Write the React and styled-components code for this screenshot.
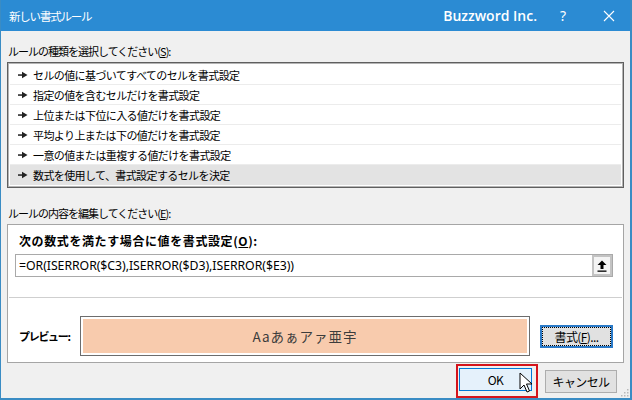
import React from 'react'
import styled, { createGlobalStyle } from 'styled-components'

const Global = createGlobalStyle`
  html, body {
    margin: 0;
    padding: 0;
    background: #f0f0f0;
  }
  body {
    font-family: "Noto Sans CJK JP", "Noto Sans", sans-serif;
    color: #000;
  }
`

const Win = styled.div`
  position: relative;
  width: 632px;
  height: 400px;
  box-sizing: border-box;
  background: #f0f0f0;
  border-left: 1px solid #3a8cc4;
  border-right: 2px solid #3a8cc4;
  border-bottom: 2px solid #3a8cc4;
  display: flex;
  flex-direction: column;
  overflow: hidden;
`

const TitleBar = styled.div`
  height: 31px;
  flex: none;
  background: #2b8bd3;
  display: flex;
  align-items: center;
  padding: 0 11px 0 9px;
  color: #fff;
  margin-left: -1px;
  margin-right: -2px;
`

const Title = styled.div`
  flex: 1;
  font-size: 11.5px;
  letter-spacing: -1.2px;
`

const Brand = styled.div`
  font-family: "Open Sans", "Noto Sans", sans-serif;
  font-weight: 600;
  font-size: 14px;
  margin-right: 20px;
`

const TitleBtn = styled.div`
  width: ${p => p.w}px;
  margin-left: ${p => p.gap || 0}px;
  display: flex;
  justify-content: center;
  font-size: 14px;
  font-family: "Noto Sans", sans-serif;
`

const Content = styled.div`
  flex: 1;
  padding: 0 6px 0 6px;
  display: flex;
  flex-direction: column;
`

const Label = styled.div`
  font-size: 11px;
  letter-spacing: -1px;
  height: 20px;
  line-height: 20px;
  margin-top: ${p => p.top}px;
  margin-left: 1px;
  u { text-decoration: underline; }
`

const List = styled.div`
  border: 1px solid #5f5f5f;
  box-shadow: inset 0 0 0 1px #b4b4b4;
  background: #fff;
  padding: 2px;
  margin-top: 1px;
`

const Row = styled.div`
  height: 20px;
  display: flex;
  align-items: center;
  font-size: 11px;
  letter-spacing: -0.6px;
  padding-left: 8px;
  background: ${p => (p.selected ? '#e3e3e3' : '#fff')};
  border-bottom: 1px solid ${p => (p.last ? 'transparent' : '#ececec')};
  box-sizing: border-box;
`

const Bullet = styled.svg`
  flex: none;
  margin-right: 5px;
`

const Group = styled.div`
  margin-top: 1px;
  border: 1px solid #a5a5a5;
  background: #fff;
  height: 139px;
  box-sizing: border-box;
  display: flex;
  flex-direction: column;
`

const BoldLabel = styled.div`
  font-weight: 700;
  font-size: 12px;
  letter-spacing: 0.6px;
  margin: 7px 0 0 11px;
  height: 17px;
  line-height: 17px;
  u { text-decoration: underline; }
`

const InputBox = styled.div`
  margin: 5px 10px 0 7px;
  height: 23px;
  box-sizing: border-box;
  border: 1px solid #a9a9a9;
  display: flex;
  align-items: center;
  padding-left: 3px;
`

const Formula = styled.div`
  flex: 1;
  font-family: "Noto Sans", sans-serif;
  font-size: 12.3px;
  letter-spacing: -0.05px;
`

const RefBtn = styled.div`
  width: 20px;
  height: 21px;
  box-sizing: border-box;
  background: #f4f4f4;
  border: 2px solid #c3c3c3;
  display: flex;
  align-items: center;
  justify-content: center;
`

const Divider = styled.div`
  margin: 20px 1px 0 1px;
  height: 1px;
  background: #cfcfcf;
`

const PreviewRow = styled.div`
  display: flex;
  align-items: center;
  margin-top: 18px;
`

const PreviewLabel = styled.div`
  width: 72px;
  flex: none;
  padding-left: 11px;
  box-sizing: border-box;
  white-space: nowrap;
  font-weight: 700;
  font-size: 11px;
  letter-spacing: -1.3px;
`

const Preview = styled.div`
  width: 450px;
  height: 40px;
  box-sizing: border-box;
  border: 1px solid #6d6d6d;
  padding: 2px;
  background: #fff;
`

const Swatch = styled.div`
  height: 100%;
  background: #f8cbad;
  display: flex;
  align-items: center;
  justify-content: center;
  font-size: 13.5px;
  letter-spacing: 1px;
  color: #3c3c3c;
`

const Button = styled.div`
  width: ${p => p.w || 72}px;
  height: 23px;
  box-sizing: border-box;
  display: flex;
  align-items: center;
  justify-content: center;
  font-size: 12px;
  letter-spacing: -0.6px;
  background: ${p => (p.hot ? '#e5f1fb' : '#e1e1e1')};
  border: 1px solid ${p => (p.focus ? '#2a7ac8' : p.hot ? '#0078d7' : '#adadad')};
  outline: ${p => (p.focus ? '1px dotted #000' : 'none')};
  outline-offset: -3px;
  box-shadow: ${p => (p.focus ? 'inset 0 0 0 1px #2a7ac8' : 'none')};
  u { text-decoration: underline; }
`

const FormatBtn = styled(Button)`
  margin-left: 10px;
`

const Footer = styled.div`
  display: flex;
  justify-content: flex-end;
  align-items: center;
  padding-right: 7px;
  margin-top: 1px;
`

const Highlight = styled.div`
  border: 2px solid #d4141c;
  padding: 2px 4px 5px 1px;
  margin-right: 7px;
`

const Cursor = styled.svg`
  position: absolute;
  left: 518px;
  top: 372px;
`

const Grip = styled.svg`
  position: absolute;
  right: 1px;
  bottom: 1px;
`

const items = [
  'セルの値に基づいてすべてのセルを書式設定',
  '指定の値を含むセルだけを書式設定',
  '上位または下位に入る値だけを書式設定',
  '平均より上または下の値だけを書式設定',
  '一意の値または重複する値だけを書式設定',
  '数式を使用して、書式設定するセルを決定',
]

const Arrow = () => (
  <Bullet width="10" height="8" viewBox="0 0 10 8">
    <rect x="0" y="3.3" width="5" height="1.5" fill="#222" />
    <path d="M4 0.8 L9.5 4 L4 7.2 Z" fill="#222" />
  </Bullet>
)

const App = () => (
  <Win>
    <Global />
    <TitleBar>
      <Title>新しい書式ルール</Title>
      <Brand>Buzzword Inc.</Brand>
      <TitleBtn w={12}>?</TitleBtn>
      <TitleBtn w={24} gap={28}>
        <svg width="12" height="12" viewBox="0 0 12 12">
          <path d="M1 1 L11 11 M11 1 L1 11" stroke="#fff" strokeWidth="1.1" />
        </svg>
      </TitleBtn>
    </TitleBar>
    <Content>
      <Label top={10}>ルールの種類を選択してください(<u>S</u>):</Label>
      <List>
        {items.map((t, i) => (
          <Row key={t} selected={i === 5} last={i === 5}>
            <Arrow />
            {t}
          </Row>
        ))}
      </List>
      <Label top={15}>ルールの内容を編集してください(<u>E</u>):</Label>
      <Group>
        <BoldLabel>次の数式を満たす場合に値を書式設定(<u>O</u>):</BoldLabel>
        <InputBox>
          <Formula>=OR(ISERROR($C3),ISERROR($D3),ISERROR($E3))</Formula>
          <RefBtn>
            <svg width="10" height="12" viewBox="0 0 10 12">
              <path d="M5 0.5 L9.5 5 L6.5 5 L6.5 9 L3.5 9 L3.5 5 L0.5 5 Z" fill="#000" />
              <rect x="0.5" y="10.5" width="9" height="1.3" fill="#000" />
            </svg>
          </RefBtn>
        </InputBox>
        <Divider />
        <PreviewRow>
          <PreviewLabel>プレビュー:</PreviewLabel>
          <Preview>
            <Swatch>Aaあぁアァ亜宇</Swatch>
          </Preview>
          <FormatBtn focus w={73}>
            書式(<u>F</u>)...
          </FormatBtn>
        </PreviewRow>
      </Group>
      <Footer>
        <Highlight>
          <Button hot w={73}>OK</Button>
        </Highlight>
        <Button w={72}>キャンセル</Button>
      </Footer>
    </Content>
    <Cursor width="14" height="22" viewBox="0 0 14 22">
      <path d="M1 1 L1 17 L5 13 L8 20 L10.5 19 L7.5 12 L13 12 Z" fill="#fff" stroke="#000" strokeWidth="1" />
    </Cursor>
    <Grip width="8" height="8" viewBox="0 0 8 8">
      <rect x="6" y="0" width="1.5" height="1.5" fill="#b9b9b9" />
      <rect x="3" y="3" width="1.5" height="1.5" fill="#b9b9b9" />
      <rect x="6" y="3" width="1.5" height="1.5" fill="#b9b9b9" />
      <rect x="0" y="6" width="1.5" height="1.5" fill="#b9b9b9" />
      <rect x="3" y="6" width="1.5" height="1.5" fill="#b9b9b9" />
      <rect x="6" y="6" width="1.5" height="1.5" fill="#b9b9b9" />
    </Grip>
  </Win>
)

export default App
